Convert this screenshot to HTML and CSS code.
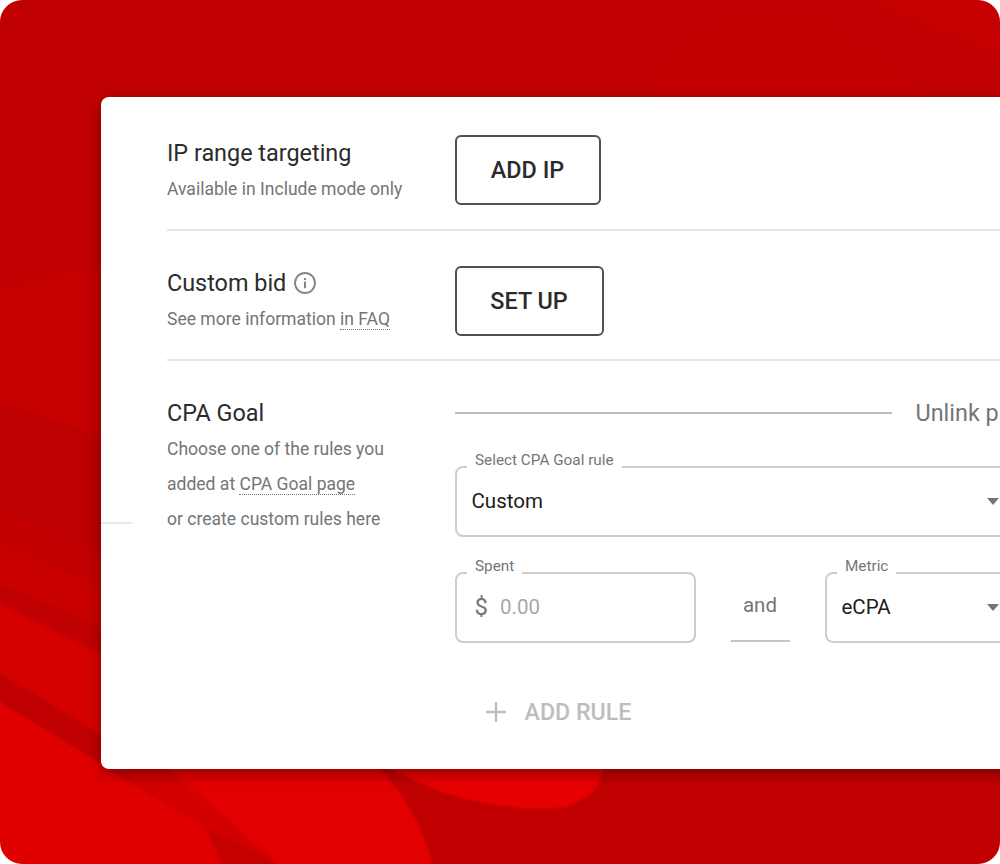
FILE: index.html
```html
<!DOCTYPE html>
<html lang="en">
<head>
<meta charset="utf-8">
<title>Campaign targeting</title>
<link rel="stylesheet" href="styles.css">
</head>
<body>
<div class="stage">
  <svg class="backdrop" viewBox="0 0 1000 864" preserveAspectRatio="none" aria-hidden="true">
    <rect x="-10" y="-10" width="1020" height="884" fill="#c00000"/>
    <path d="M-10 285 C40 275 70 270 110 262 L110 440 L60 425 L-10 402Z" fill="#c40000"/>
    <path d="M-10 402 L110 440 L110 560 L-10 505Z" fill="#bd0000"/>
    <path d="M-10 505 L110 560 L110 625 L-10 540Z" fill="#c30000"/>
    <path d="M-10 540 L110 590 L110 630 L-10 580Z" fill="#c80000"/>
    <path d="M-10 598 L110 658 L110 740 L-10 667Z" fill="#d50000"/>
    <path d="M-10 696 L205 827 L227 874 L-10 874Z" fill="#e00000"/>
    <path d="M108 765 L377 765 C400 790 425 825 435 874 L277 874 L205 827Z" fill="#e20000"/>
    <path d="M108 765 L165 765 L290 874 L277 874 L205 827Z" fill="#d20000"/>
    <path d="M205 827 L277 864 L285 874 L227 874Z" fill="#c40000"/>
    <path d="M385 765 L603 765 C603 785 590 795 578 802 C565 812 520 810 490 804 C450 796 420 786 385 765Z" fill="#e60000"/>
    <path d="M640 100 L690 30 L810 10 L925 90 L925 100Z" fill="#c30000"/>
    <path d="M830 -10 L1010 62 L1010 -10Z" fill="#c40000"/>
  </svg>

  <main class="card">
    <section class="row">
      <div class="info">
        <h2 class="title">IP range targeting</h2>
        <p class="hint">Available in Include mode only</p>
      </div>
      <button class="action add-ip" type="button">ADD IP</button>
    </section>

    <section class="row">
      <div class="info">
        <h2 class="title">Custom bid
          <svg class="info-icon" viewBox="0 0 24 24" aria-hidden="true">
            <circle cx="12" cy="12" r="10" fill="none" stroke="#858585" stroke-width="1.9"/>
            <rect x="11" y="10.6" width="2" height="6.6" fill="#858585"/>
            <rect x="11" y="7" width="2" height="2" fill="#858585"/>
          </svg>
        </h2>
        <p class="hint">See more information <a class="dotted" href="#">in FAQ</a></p>
      </div>
      <button class="action set-up" type="button">SET UP</button>
    </section>

    <section class="goal">
      <div class="goal-info">
        <h2 class="title">CPA Goal</h2>
        <p class="hint tall">Choose one of the rules you</p>
        <p class="hint tall">added at <a class="dotted" href="#">CPA Goal page</a></p>
        <p class="hint tall">or create custom rules here</p>
      </div>
      <div class="goal-form">
        <div class="unlink">
          <span class="unlink-line"></span>
          <span class="unlink-text">Unlink placements</span>
        </div>
        <div class="field field-rule">
          <span class="legend">Select CPA Goal rule</span>
          <span class="value">Custom</span>
          <span class="caret"></span>
        </div>
        <div class="rule-line">
          <div class="field field-spent">
            <span class="legend">Spent</span>
            <span class="currency">$</span>
            <span class="placeholder">0.00</span>
          </div>
          <div class="joiner">and</div>
          <div class="field field-metric">
            <span class="legend">Metric</span>
            <span class="value">eCPA</span>
            <span class="caret"></span>
          </div>
        </div>
        <button class="add-rule" type="button">
          <svg class="plus" viewBox="0 0 22 22" aria-hidden="true">
            <path d="M11 1V21M1 11H21" stroke="#bdbdbd" stroke-width="2.4" fill="none"/>
          </svg>
          ADD RULE
        </button>
      </div>
    </section>
    <span class="stray-line"></span>
  </main>
</div>
</body>
</html>
```
FILE: styles.css
```css
* { box-sizing: border-box; }
html, body { margin: 0; padding: 0; background: #fff; }
body { width: 1000px; height: 864px; overflow: hidden; font-family: Roboto, "Liberation Sans", sans-serif; }
.stage { position: relative; width: 1000px; height: 864px; border-radius: 22px; overflow: hidden; padding: 97px 0 0 101px; }
.backdrop { position: absolute; inset: 0; width: 1000px; height: 864px; overflow: visible; filter: blur(1px); }
.card { position: relative; width: 960px; height: 672px; padding-left: 66px; background: #fff; border-radius: 8px; box-shadow: 0 5px 14px rgba(0, 0, 0, .35); }
.row { display: flex; align-items: center; height: 134px; border-bottom: 2px solid #e4e4e4; padding: 38px 0 24px; }
.row + .row { height: 130px; padding: 35px 0 23px; }
.info, .goal-info { width: 287.5px; flex: none; }
.info { margin-bottom: 2px; }
.row + .row .info { margin-bottom: 4px; }
.title { margin: 0; font-size: 23.4px; line-height: 32px; font-weight: 400; color: #2b2b2b; display: flex; align-items: center; }
.hint { margin: 8px 0 0; font-size: 17.55px; line-height: 24px; color: #757575; }
.hint.tall { margin: 0; line-height: 35px; }
.goal-info .title { margin-bottom: 3px; }
.dotted { color: inherit; text-decoration: none; border-bottom: 1.5px dotted #757575; }
.info-icon { width: 24px; height: 24px; margin-left: 7px; }
.action { height: 70px; background: #fff; border: 2px solid #505050; border-radius: 6px; font: 500 23.4px Roboto, sans-serif; color: #2b2b2b; padding: 0; }
.add-ip { width: 146px; }
.set-up { width: 149px; }
.goal { display: flex; padding-top: 36px; }
.goal-form { flex: none; width: 570px; }
.unlink { display: flex; align-items: center; height: 32px; width: 560px; white-space: nowrap; }
.unlink-line { width: 437px; height: 2px; background: #bdbdbd; flex: none; margin-right: 24px; }
.unlink-text { font-size: 23.4px; color: #757575; }
.field { position: relative; height: 71px; border: 2px solid #cdcdcd; border-radius: 8px; display: flex; align-items: center; padding: 0 0 2px 15px; }
.field-rule { margin-top: 37px; }
.legend { position: absolute; top: -19px; left: 10.5px; padding: 0 8px; background: #fff; font-size: 15.3px; line-height: 22px; color: #757575; white-space: nowrap; }
.value { font-size: 20.5px; color: #1c1c1c; }
.caret { position: absolute; right: 24px; top: 50%; margin-top: -4px; border-left: 6.5px solid transparent; border-right: 6.5px solid transparent; border-top: 7px solid #757575; }
.rule-line { display: flex; margin-top: 35px; }
.field-spent { width: 241px; flex: none; }
.currency { font-size: 24px; color: #757575; margin: 0 12px 0 3px; }
.placeholder { font-size: 20.5px; color: #a8a8a8; }
.joiner { flex: none; width: 59px; height: 70px; margin: 0 35px; padding-bottom: 2px; border-bottom: 2px solid #c4c4c4; display: flex; align-items: center; justify-content: center; font-size: 20.5px; color: #757575; }
.field-metric { flex: 1; }
.add-rule { display: flex; align-items: center; margin: 55px 0 0 30px; padding: 0; background: none; border: 0; font: 500 23.2px Roboto, sans-serif; color: #bdbdbd; }
.plus { width: 22px; height: 22px; margin-right: 18px; }
.stray-line { position: absolute; left: 0; top: 425px; width: 31px; height: 2px; background: #e8e8e8; }
```
